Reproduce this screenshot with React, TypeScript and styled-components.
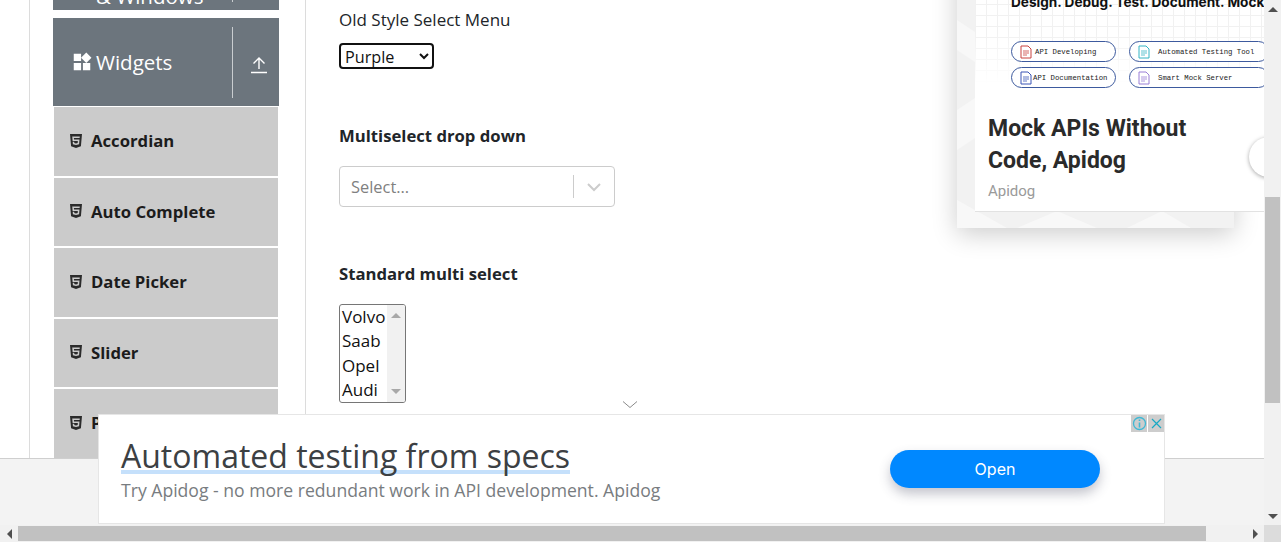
import styled, { createGlobalStyle } from "styled-components";
import { FaHtml5 } from "react-icons/fa";
import { MdWidgets } from "react-icons/md";

const GlobalStyle = createGlobalStyle`
  html, body {
    margin: 0;
    padding: 0;
    overflow: hidden;
    background: #fff;
  }
  body {
    font-family: "Open Sans", "Liberation Sans", sans-serif;
    color: #212529;
  }
`;

const Viewport = styled.div`
  position: relative;
  width: 1281px;
  height: 542px;
  overflow: hidden;
  display: grid;
  grid-template-columns: 1264px 17px;
  grid-template-rows: 525px 17px;
`;

const Page = styled.div`
  overflow: hidden;
  background: #fff;
  padding-left: 29px;
`;

const Container = styled.div`
  display: flex;
  height: 525px;
  border-left: 1px solid #dcdcdc;
`;

const Sidebar = styled.aside`
  flex: 0 0 226px;
  border-right: 1px solid #dcdcdc;
  padding: 0 26px 0 23px;
  display: flex;
  flex-direction: column;
`;

const GroupHeader = styled.div<{ $clipped?: boolean }>`
  flex: none;
  height: 88px;
  margin-top: ${(p) => (p.$clipped ? "-78px" : "7px")};
  background: #6c757d;
  color: #fff;
  display: flex;
  align-items: center;
  margin-bottom: 1px;
`;

const GroupTitle = styled.div`
  flex: 1;
  display: flex;
  align-items: center;
  gap: 3px;
  padding-left: 18px;
  font-size: 20.5px;
  line-height: 26px;
`;

const GroupText = styled.span<{ $inset?: boolean }>`
  display: block;
  padding: ${(p) => (p.$inset ? "34px 0 0 25px" : "0")};
`;

const GroupToggle = styled.div`
  flex: none;
  width: 47px;
  height: 71px;
  border-left: 1px solid #c9cdd0;
  display: flex;
  align-items: center;
  justify-content: center;
  padding: 5px 0 0 6px;
  box-sizing: border-box;
`;

const ItemList = styled.div`
  display: flex;
  flex-direction: column;
  gap: 2px;
  padding: 0 1px;
`;

const Item = styled.div`
  flex: none;
  height: 68.5px;
  box-sizing: border-box;
  background: #cbcbcb;
  display: flex;
  align-items: center;
  gap: 7px;
  padding: 0 0 1px 14px;
  font-size: 16.7px;
  font-weight: 700;
  color: #1c1c1c;
`;

const Main = styled.main`
  flex: 1;
  padding: 7px 0 0 33px;
  font-size: 17px;
  line-height: 26px;
`;

const PlainLabel = styled.div`
  color: #212529;
`;

const OldSelect = styled.select`
  display: block;
  width: 95px;
  height: 26px;
  margin-top: 10px;
  box-sizing: border-box;
  border: 2px solid #111;
  border-radius: 4px;
  background: #fff;
  color: #111;
  font: 16.2px "Open Sans", sans-serif;
  padding: 0;
  outline: none;
`;

const BoldLabel = styled.div<{ $top: number }>`
  font-weight: 700;
  font-size: 16.7px;
  color: #212529;
  margin-top: ${(p) => p.$top}px;
`;

const ComboBox = styled.div`
  width: 276px;
  height: 41px;
  margin-top: 17px;
  box-sizing: border-box;
  border: 1px solid #ccc;
  border-radius: 4px;
  display: flex;
  align-items: center;
  color: #808080;
  font-size: 16.4px;
`;

const ComboValue = styled.span`
  flex: 1;
  padding-left: 11px;
`;

const ComboDivider = styled.span`
  width: 1px;
  height: 23px;
  background: #ccc;
`;

const ComboArrow = styled.span`
  width: 40px;
  display: flex;
  justify-content: center;
`;

const ListBox = styled.div`
  width: 67px;
  height: 99px;
  margin-top: 17px;
  box-sizing: border-box;
  border: 1px solid #767676;
  border-radius: 3px;
  display: flex;
  overflow: hidden;
  font-size: 17px;
  line-height: 24.3px;
  color: #111;
`;

const ListOptions = styled.div`
  flex: 1;
  padding-left: 2px;
`;

const ListRail = styled.div`
  flex: none;
  width: 18px;
  background: #f1f1f1;
  display: flex;
  flex-direction: column;
  justify-content: space-between;
  align-items: center;
  padding: 8px 0;
  box-sizing: border-box;
`;

const Triangle = styled.span<{ $dir: "up" | "down" | "left" | "right"; $color?: string }>`
  display: block;
  width: 0;
  height: 0;
  border-style: solid;
  border-color: transparent;
  ${(p) => {
    const c = p.$color ?? "#505050";
    if (p.$dir === "up") return `border-width: 0 5px 5px; border-bottom-color: ${c};`;
    if (p.$dir === "down") return `border-width: 5px 5px 0; border-top-color: ${c};`;
    if (p.$dir === "left") return `border-width: 5px 5px 5px 0; border-right-color: ${c};`;
    return `border-width: 5px 0 5px 5px; border-left-color: ${c};`;
  }}
`;

const VScroll = styled.div`
  background: #f1f1f1;
  display: flex;
  flex-direction: column;
  align-items: center;
  position: relative;
  z-index: 3;
`;

const VArrowTop = styled.div`
  height: 17px;
  flex: none;
  padding-top: 7px;
  box-sizing: border-box;
`;

const VThumb = styled.div`
  width: 15px;
  height: 206px;
  margin-top: 180px;
  background: #c1c1c1;
`;

const VArrowBottom = styled.div`
  margin-top: auto;
  height: 17px;
  flex: none;
  padding-top: 6px;
  box-sizing: border-box;
`;

const HScroll = styled.div`
  background: #f1f1f1;
  display: flex;
  align-items: center;
  position: relative;
  z-index: 3;
`;

const HArrow = styled.div`
  flex: none;
  width: 18px;
  display: flex;
  justify-content: center;
`;

const HThumb = styled.div`
  width: 1188px;
  height: 15px;
  background: #c1c1c1;
`;

const HSpacer = styled.div`
  flex: 1;
`;

const Corner = styled.div`
  background: #dcdcdc;
  position: relative;
  z-index: 3;
`;

const SideAd = styled.div`
  position: absolute;
  left: 957px;
  top: -40px;
  width: 277px;
  height: 268px;
  background: #f2f2f2;
  box-shadow: 0 6px 24px rgba(0, 0, 0, 0.2);
  z-index: 1;
`;

const SidePattern = styled.svg`
  position: absolute;
  inset: 0;
  width: 100%;
  height: 100%;
`;

const SideCard = styled.div`
  position: absolute;
  left: 18px;
  top: 0;
  width: 289px;
  height: 251px;
  background: #fff;
  border-bottom: 1px solid #e2e2e2;
  overflow: hidden;
`;

const SideImage = styled.div`
  height: 144px;
  padding-left: 36px;
  box-sizing: border-box;
  background-image:
    linear-gradient(to bottom, transparent 50%, #fff 86%),
    linear-gradient(#f1f1f1 1px, transparent 1px),
    linear-gradient(90deg, #f1f1f1 1px, transparent 1px);
  background-size: 100% 100%, 11px 11px, 11px 11px;
`;

const ImageTitle = styled.div`
  padding-top: 34px;
  font: 700 13.6px/16px Inter, sans-serif;
  color: #111;
  white-space: nowrap;
`;

const ChipGrid = styled.div`
  display: grid;
  grid-template-columns: 105px 140px;
  column-gap: 13px;
  row-gap: 5px;
  margin-top: 31px;
`;

const Chip = styled.div<{ $gap: number }>`
  height: 21px;
  box-sizing: border-box;
  border: 1px solid #3d5a9e;
  border-radius: 11px;
  background: #fff;
  display: flex;
  align-items: center;
  gap: ${(p) => p.$gap}px;
  padding-left: 8px;
  font: 7.3px "Liberation Mono", monospace;
  color: #222;
  white-space: nowrap;
`;

const SideBody = styled.div`
  padding: 9px 0 0 13px;
`;

const SideHeading = styled.div`
  font: 700 23px/32px Roboto, sans-serif;
  color: #2a2a2a;
`;

const SideSource = styled.div`
  margin-top: 4px;
  font: 15px/20px Roboto, sans-serif;
  color: #9a9a9a;
`;

const RoundButton = styled.div`
  position: absolute;
  left: 1249px;
  top: 137px;
  width: 40px;
  height: 40px;
  border-radius: 50%;
  background: #fff;
  box-shadow: 0 1px 4px rgba(0, 0, 0, 0.35);
  z-index: 2;
`;

const BottomBar = styled.div`
  position: absolute;
  left: 0;
  top: 458px;
  width: 1264px;
  height: 67px;
  background: #f3f3f3;
  border-top: 1px solid #cfcfcf;
  box-sizing: border-box;
  z-index: 2;
`;

const CollapseMark = styled.svg`
  position: absolute;
  left: 622px;
  top: 400px;
  z-index: 2;
`;

const BottomAd = styled.div`
  position: absolute;
  left: 98px;
  top: 414px;
  width: 1067px;
  height: 110px;
  box-sizing: border-box;
  background: #fff;
  border: 1px solid #e6e6e6;
  display: flex;
  align-items: center;
  justify-content: space-between;
  padding: 0 64px 0 22px;
  z-index: 2;
`;

const AdCopy = styled.div`
  padding-top: 2px;
`;

const AdTitle = styled.div`
  width: fit-content;
  font: 400 32px/36px "Open Sans", sans-serif;
  color: #3c4043;
  background: linear-gradient(#c5e0fb, #c5e0fb) no-repeat 0 32px / 100% 4px;
`;

const AdSubtitle = styled.div`
  margin-top: 4px;
  font: 400 17.6px/24px "Open Sans", sans-serif;
  color: #787c80;
`;

const OpenButton = styled.div`
  width: 210px;
  height: 38px;
  border-radius: 19px;
  background: #0088ff;
  color: #fff;
  font: 400 16px/38px Inter, sans-serif;
  text-align: center;
  box-shadow: 0 6px 12px rgba(60, 64, 90, 0.3);
`;

const AdBadges = styled.div`
  position: absolute;
  top: 0;
  right: 0;
  display: flex;
  gap: 1px;
`;

const AdBadge = styled.div`
  width: 16px;
  height: 17px;
  background: #cdcdcd;
  display: flex;
  align-items: center;
  justify-content: center;
`;

const items = ["Accordian", "Auto Complete", "Date Picker", "Slider", "Progress Bar"];

const chips = [
  { label: "API Developing", color: "#c9433f", gap: 3 },
  { label: "Automated Testing Tool", color: "#35b4c4", gap: 8 },
  { label: "API Documentation", color: "#3b55b5", gap: 1 },
  { label: "Smart Mock Server", color: "#9a7fd6", gap: 8 },
];

function UploadIcon() {
  return (
    <svg width="18" height="18" viewBox="0 0 18 18" fill="none" stroke="#fff" strokeWidth="1.4">
      <path d="M9 13V2M3.5 7.5 9 2l5.5 5.5M1 16.5h16" />
    </svg>
  );
}

function ChipIcon({ color }: { color: string }) {
  return (
    <svg width="12" height="14" viewBox="0 0 12 14" fill="none" stroke={color} strokeWidth="1">
      <path d="M1 1h7l3 3v9H1z" />
      <path d="M3 6h6M3 8h6M3 10h4" strokeWidth="0.8" />
    </svg>
  );
}

function Chevron({ color, width }: { color: string; width: number }) {
  return (
    <svg width="16" height="10" viewBox="0 0 16 10" fill="none" stroke={color} strokeWidth={width}>
      <path d="M2 2l6 6 6-6" />
    </svg>
  );
}

export default function App() {
  return (
    <Viewport>
      <GlobalStyle />
      <Page>
        <Container>
          <Sidebar>
            <GroupHeader $clipped>
              <GroupTitle>
                <GroupText $inset>
                  Alerts, Frame
                  <br />& Windows
                </GroupText>
              </GroupTitle>
              <GroupToggle />
            </GroupHeader>
            <GroupHeader>
              <GroupTitle>
                <MdWidgets size={22} />
                <GroupText>Widgets</GroupText>
              </GroupTitle>
              <GroupToggle>
                <UploadIcon />
              </GroupToggle>
            </GroupHeader>
            <ItemList>
              {items.map((item) => (
                <Item key={item}>
                  <FaHtml5 size={16} color="#2b2b2b" />
                  {item}
                </Item>
              ))}
            </ItemList>
          </Sidebar>
          <Main>
            <PlainLabel>Old Style Select Menu</PlainLabel>
            <OldSelect defaultValue="Purple">
              <option>Purple</option>
              <option>Blue</option>
              <option>Green</option>
            </OldSelect>
            <BoldLabel $top={54}>Multiselect drop down</BoldLabel>
            <ComboBox>
              <ComboValue>Select...</ComboValue>
              <ComboDivider />
              <ComboArrow>
                <Chevron color="#cccccc" width={2} />
              </ComboArrow>
            </ComboBox>
            <BoldLabel $top={54}>Standard multi select</BoldLabel>
            <ListBox>
              <ListOptions>
                <div>Volvo</div>
                <div>Saab</div>
                <div>Opel</div>
                <div>Audi</div>
              </ListOptions>
              <ListRail>
                <Triangle $dir="up" $color="#a8a8a8" />
                <Triangle $dir="down" $color="#a8a8a8" />
              </ListRail>
            </ListBox>
          </Main>
        </Container>
      </Page>
      <VScroll>
        <VArrowTop>
          <Triangle $dir="up" />
        </VArrowTop>
        <VThumb />
        <VArrowBottom>
          <Triangle $dir="down" />
        </VArrowBottom>
      </VScroll>
      <HScroll>
        <HArrow>
          <Triangle $dir="left" />
        </HArrow>
        <HThumb />
        <HSpacer />
        <HArrow>
          <Triangle $dir="right" />
        </HArrow>
      </HScroll>
      <Corner />

      <SideAd>
        <SidePattern viewBox="0 0 277 268" preserveAspectRatio="none">
          <g fill="#f8f8f8">
            <path d="M0 60l18 12v30L0 90zM0 150l18-12v40L0 190zM0 240l50 28H0zM60 268l40-17 40 17zM170 268l35-17 29 17z" />
          </g>
        </SidePattern>
        <SideCard>
          <SideImage>
            <ImageTitle>Design. Debug. Test. Document. Mock</ImageTitle>
            <ChipGrid>
              {chips.map((chip) => (
                <Chip key={chip.label} $gap={chip.gap}>
                  <ChipIcon color={chip.color} />
                  {chip.label}
                </Chip>
              ))}
            </ChipGrid>
          </SideImage>
          <SideBody>
            <SideHeading>
              Mock APIs Without
              <br />
              Code, Apidog
            </SideHeading>
            <SideSource>Apidog</SideSource>
          </SideBody>
        </SideCard>
      </SideAd>
      <RoundButton />

      <BottomBar />
      <CollapseMark width="16" height="10" viewBox="0 0 16 10" fill="none" stroke="#8a8a8a" strokeWidth="1">
        <path d="M1 1.5l7 6 7-6" />
      </CollapseMark>
      <BottomAd>
        <AdCopy>
          <AdTitle>Automated testing from specs</AdTitle>
          <AdSubtitle>Try Apidog - no more redundant work in API development. Apidog</AdSubtitle>
        </AdCopy>
        <OpenButton>Open</OpenButton>
        <AdBadges>
          <AdBadge>
            <svg width="15" height="15" viewBox="0 0 15 15" fill="none" stroke="#3fb8d4" strokeWidth="1.3">
              <circle cx="7.5" cy="7.5" r="6" />
              <path d="M7.5 6.5v5M7.5 3.5v1.6" strokeWidth="1.6" />
            </svg>
          </AdBadge>
          <AdBadge>
            <svg width="13" height="13" viewBox="0 0 13 13" fill="none" stroke="#18a9c4" strokeWidth="1.2">
              <path d="M2 2l9 9M11 2l-9 9" />
            </svg>
          </AdBadge>
        </AdBadges>
      </BottomAd>
    </Viewport>
  );
}
